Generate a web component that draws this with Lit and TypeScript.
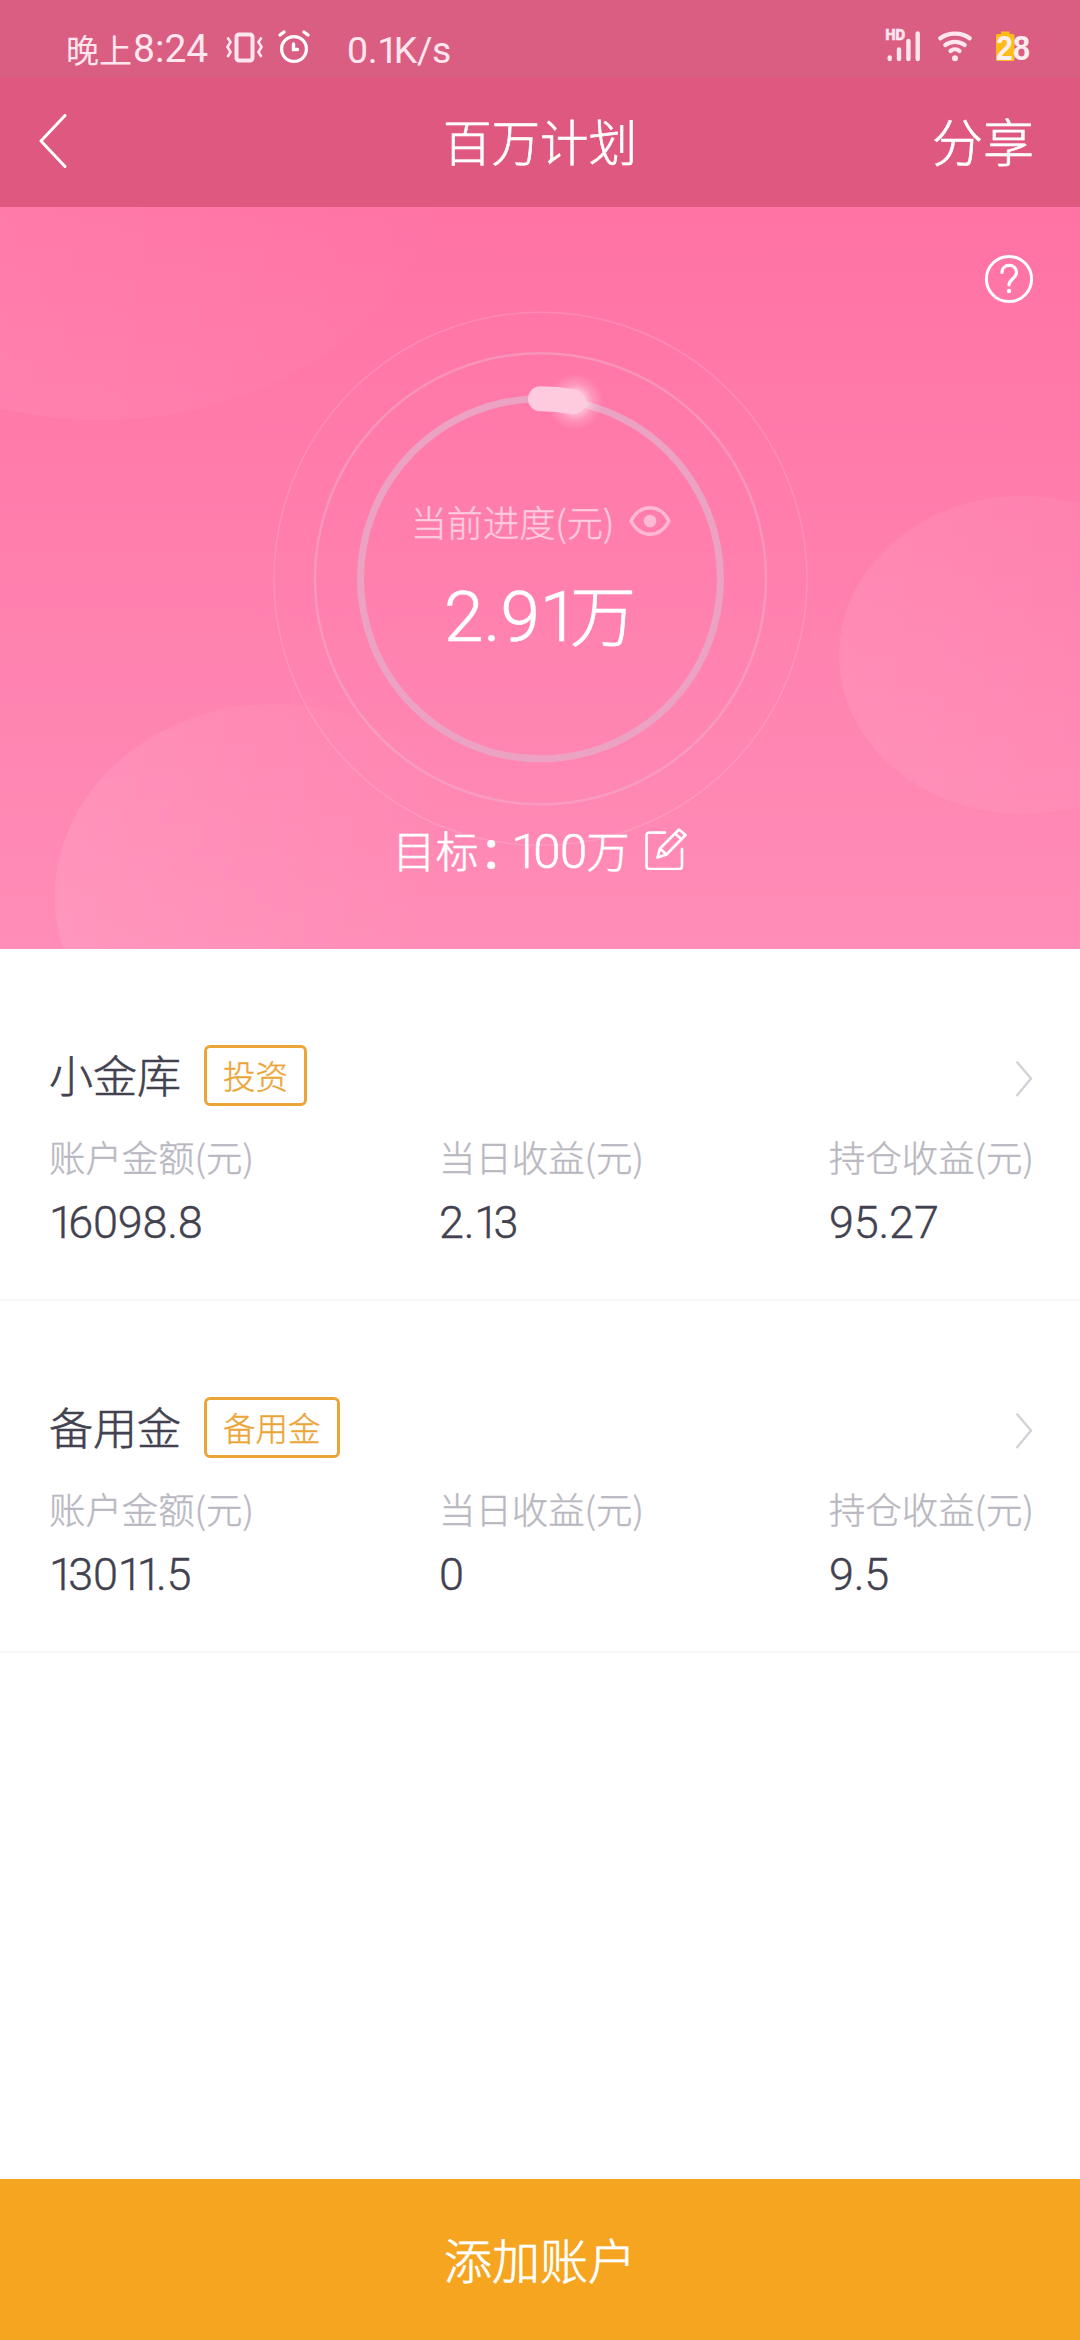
import { LitElement, html, css, svg } from "lit";
import { customElement, property } from "lit/decorators.js";

interface Account {
  name: string;
  tag: string;
  stats: { label: string; value: string }[];
}

const ACCOUNTS: Account[] = [
  {
    name: "小金库",
    tag: "投资",
    stats: [
      { label: "账户金额(元)", value: "16098.8" },
      { label: "当日收益(元)", value: "2.13" },
      { label: "持仓收益(元)", value: "95.27" },
    ],
  },
  {
    name: "备用金",
    tag: "备用金",
    stats: [
      { label: "账户金额(元)", value: "13011.5" },
      { label: "当日收益(元)", value: "0" },
      { label: "持仓收益(元)", value: "9.5" },
    ],
  },
];

/* Figures are proportional: the digit 1 takes less room than the others. */
const figures = (value: string) =>
  html`<span class="num">${[...value].map((c) => (c === "1" ? html`<span class="one">1</span>` : c))}</span>`;

const figureStyles = css`
  .num {
    font-family: Roboto, sans-serif;
  }
  .one {
    letter-spacing: -0.13em;
  }
`;

@customElement("status-bar")
export class StatusBar extends LitElement {
  static styles = [
    figureStyles,
    css`
      :host {
        display: flex;
        height: 77px;
        box-sizing: border-box;
        padding: 19px 50px 0 66px;
        align-items: center;
        justify-content: space-between;
        color: #ffe6ef;
        background: #da5d82;
      }
      .side {
        display: flex;
        align-items: center;
        height: 58px;
      }
      .time {
        display: flex;
        align-items: center;
        width: 160px;
        height: 58px;
        margin-top: 2px;
        font-size: 33px;
        line-height: 58px;
        white-space: nowrap;
      }
      .time .num {
        font-size: 39px;
        line-height: 56px;
        margin-left: 1px;
      }
      svg {
        display: block;
        overflow: visible;
      }
      .alarm {
        margin-left: 15px;
        margin-top: -2px;
      }
      .speed {
        margin-left: 37px;
        font-size: 37.500px;
        line-height: 56px;
      }
      .speed .num {
        letter-spacing: -0.4px;
      }
      .speed .one {
        letter-spacing: -0.12em;
      }
      .right {
        margin-top: -5px;
      }
      .wifi {
        margin-left: 17px;
      }
      .battery {
        margin-left: 22px;
      }
      .hd {
        font: 800 14px Inter, sans-serif;
        stroke: #ffe6ef;
        stroke-width: 0.6px;
      }
      .level {
        font: 700 35px "Liberation Sans", sans-serif;
      }
    `,
  ];

  render() {
    return html`
      <div class="side">
        <span class="time">晚上${figures("8:24")}</span>
        <svg width="37" height="32" viewBox="0 0 37 32" fill="none" stroke="#ffe6ef">
          <rect x="10.500" y="2.500" width="16" height="26" rx="2.5" stroke-width="4" />
          <path d="M1.500 5.500l3 4.500-3 5 3 5-3 5M35.500 5.500l-3 4.500 3 5-3 5 3 5" stroke-width="2.6" />
        </svg>
        <svg class="alarm" width="32" height="34" viewBox="0 0 32 34" fill="none" stroke="#fff" stroke-linecap="round">
          <circle cx="16" cy="19" r="12.4" stroke-width="3.2" />
          <path d="M15.5 14v5.5h4" stroke-width="3.4" />
          <path d="M2 5l4-3M30 5l-4-3" stroke-width="3.4" />
        </svg>
        <span class="speed">${figures("0.1K/s")}</span>
      </div>
      <div class="side right">
        <svg width="36" height="34" viewBox="0 0 36 34" fill="none" stroke="#ffe6ef" stroke-width="4.4" stroke-linecap="round">
          <text class="hd" x="0.500" y="11" textLength="19.500" lengthAdjust="spacingAndGlyphs" fill="#ffe6ef">HD</text>
          <path d="M4.7 28.5v1.500M14 20.5v9.500M23.4 12v18M32.700 4.500v25.500" />
        </svg>
        <svg class="wifi" width="34" height="34" viewBox="0 0 34 34" fill="none" stroke="#ffe6ef" stroke-width="4.200" stroke-linecap="round">
          <path d="M2.300 9.300c8.500-6.200 21-6.200 29.400 0M7.300 16c5.500-4.200 14-4.200 19.400 0M12.500 22c2.600-2.100 6.400-2.100 9 0" />
          <circle cx="17" cy="29.300" r="3" fill="#ffe6ef" stroke="none" />
        </svg>
        <svg class="battery" width="36" height="34" viewBox="0 0 36 34">
          <path d="M7 2.500h8.500V5H19q1.500 0 1.500 1.500V30.500q0 1.500-1.500 1.500H3.500q-1.500 0-1.500-1.500V6.500Q2 5 3.500 5H7z" fill="#fdbd16" />
          <text class="level" x="2" y="31" textLength="34" lengthAdjust="spacingAndGlyphs" fill="#ffeef0">28</text>
        </svg>
      </div>
    `;
  }
}

@customElement("nav-bar")
export class NavBar extends LitElement {
  static styles = css`
    :host {
      display: grid;
      grid-template-columns: 1fr auto 1fr;
      align-items: center;
      height: 130px;
      box-sizing: border-box;
      padding: 0 46px;
      background: #de587f;
      color: #fff;
      font-weight: 300;
      -webkit-text-stroke: 0.7px currentColor;
    }
    .back {
      margin-left: -8px;
    }
    .title,
    .share {
      font-size: 48.500px;
      line-height: 126px;
      height: 130px;
    }
    .share {
      justify-self: end;
      font-size: 51px;
      line-height: 126px;
    }
  `;

  render() {
    return html`
      <svg class="back" width="30" height="56" viewBox="0 0 30 56" fill="none" stroke="#fff" stroke-width="3" stroke-linecap="round" stroke-linejoin="round">
        <path d="M27 1.500L3 27l24 25.500" />
      </svg>
      <span class="title">百万计划</span>
      <span class="share">分享</span>
    `;
  }
}

@customElement("progress-hero")
export class ProgressHero extends LitElement {
  @property({ type: Number }) percent = 2.91;

  static styles = [
    figureStyles,
    css`
      :host {
        display: block;
        position: relative;
        height: 742px;
        overflow: hidden;
        background: linear-gradient(#ff72a4, #ff8db7);
        color: #fff;
        font-weight: 300;
      }
      .art {
        position: absolute;
        inset: 0;
      }
      .content {
        position: relative;
        display: flex;
        flex-direction: column;
        align-items: center;
        height: 742px;
      }
      .help {
        align-self: flex-end;
        margin: 47px 46px 0 0;
        display: block;
      }
      .caption {
        display: flex;
        align-items: center;
        margin-top: 191px;
        margin-left: 2px;
        height: 52px;
        font-size: 36.200px;
        line-height: 52px;
        color: #ffcbde;
        -webkit-text-stroke: 0.4px currentColor;
      }
      .eye {
        margin-left: 15px;
        margin-top: -1px;
      }
      .amount {
        display: flex;
        align-items: baseline;
        margin-top: 17px;
        height: 96px;
        line-height: 96px;
        font-size: 66px;
        -webkit-text-stroke: 0.7px currentColor;
      }
      .amount .num {
        font-size: 71px;
      }
      .goal {
        display: flex;
        align-items: center;
        margin-top: 159px;
        height: 60px;
        line-height: 60px;
        font-size: 43px;
        white-space: nowrap;
        -webkit-text-stroke: 0.6px currentColor;
      }
      .goal .num {
        font-size: 49px;
        line-height: 1;
        letter-spacing: -0.6px;
      }
      .goal .one {
        letter-spacing: -0.11em;
      }
      .colon {
        margin-left: 2px;
        letter-spacing: -12px;
        font-weight: 400;
        -webkit-text-stroke-width: 1.2px;
      }
      .edit {
        margin-left: 16px;
      }
    `,
  ];

  render() {
    const r = 180;
    const a = (this.percent / 100) * Math.PI * 2;
    const ex = 540.5 + r * Math.sin(a);
    const ey = 371.8 - r * Math.cos(a);
    return html`
      <svg class="art" width="1080" height="742" viewBox="0 0 1080 742" fill="none">
        <defs>
          <linearGradient id="b1" x1="0" x2="1">
            <stop offset="0.3" stop-color="#fff" stop-opacity="0.06" />
            <stop offset="1" stop-color="#fff" stop-opacity="0.005" />
          </linearGradient>
          <linearGradient id="b2" x1="0" x2="1" y1="0.2" y2="0.3">
            <stop offset="0" stop-color="#fff" stop-opacity="0.09" />
            <stop offset="0.9" stop-color="#fff" stop-opacity="0" />
          </linearGradient>
          <linearGradient id="b3" x1="0" x2="1">
            <stop offset="0" stop-color="#fff" stop-opacity="0.08" />
            <stop offset="1" stop-color="#fff" stop-opacity="0.01" />
          </linearGradient>
          <radialGradient id="glow">
            <stop offset="0.3" stop-color="#fff" stop-opacity="0.6" />
            <stop offset="0.65" stop-color="#fff" stop-opacity="0.2" />
            <stop offset="1" stop-color="#fff" stop-opacity="0" />
          </radialGradient>
        </defs>
        <ellipse cx="100" cy="-53" rx="342" ry="266" fill="url(#b1)" />
        <ellipse cx="275" cy="690" rx="220" ry="193" fill="url(#b2)" />
        <ellipse cx="1023" cy="448" rx="184" ry="159" fill="url(#b3)" />
        <circle cx="540.5" cy="371.8" r="266.500" stroke="#fff" stroke-opacity="0.15" stroke-width="1.400" />
        <circle cx="540.5" cy="371.8" r="225.500" stroke="#f0b0cb" stroke-opacity="0.5" stroke-width="2.500" />
        <circle cx="540.5" cy="371.8" r="180" stroke="#eca2c2" stroke-width="7" />
        ${svg`
          <circle cx=${ex + 2} cy=${ey} r="28" fill="url(#glow)" />
          <path d="M540.5 ${371.8 - r}A${r} ${r} 0 0 1 ${ex} ${ey}" stroke="#fecade" stroke-width="25" stroke-linecap="round" />
        `}
      </svg>
      <div class="content">
        <svg class="help" width="50" height="50" viewBox="0 0 50 50" fill="none" stroke="#fff" stroke-linecap="round">
          <circle cx="25" cy="25" r="22.600" stroke-width="3" />
          <path d="M18 18.500c0-9.500 14.500-9.500 14.500 0 0 5.500-7.500 7-7.500 12.500" stroke-width="3.200" />
          <circle cx="25" cy="37" r="2.200" fill="#fff" stroke="none" />
        </svg>
        <div class="caption">
          <span>当前进度(元)</span>
          <svg class="eye" width="42" height="30" viewBox="0 0 42 30" fill="none">
            <path d="M2 15C7 5.500 14 1.800 21 1.800S35 5.500 40 15C35 24.500 28 28.200 21 28.200S7 24.500 2 15z" stroke="#ffb9d3" stroke-width="3.400" stroke-linejoin="round" />
            <circle cx="21" cy="15" r="6.300" fill="#ffb9d3" />
          </svg>
        </div>
        <div class="amount">${figures("2.91")}万</div>
        <div class="goal">
          <span>目标<span class="colon">：</span>${figures("100")}万</span>
          <svg class="edit" width="42" height="42" viewBox="0 0 42 42" fill="none" stroke="#fff" stroke-width="2.600" stroke-linejoin="round" stroke-linecap="round">
            <path d="M20 4.600H4.500q-3 0-3 3V38q0 3 3 3H34q3 0 3-3V21" />
            <path d="M12.500 29.500l2.500-9L34 1.500l6.500 5.500-19 19.500zM30 5.500l6.500 5.800M15 20.500l6.500 6" />
          </svg>
        </div>
      </div>
    `;
  }
}

@customElement("account-card")
export class AccountCard extends LitElement {
  @property({ attribute: false }) account!: Account;

  static styles = [
    figureStyles,
    css`
      :host {
        display: block;
        height: 352px;
        box-sizing: border-box;
        padding: 96px 47px 0 49px;
        border-bottom: 2px solid #f7f7f8;
        font-weight: 300;
        color: #42414f;
        -webkit-text-stroke: 0.4px currentColor;
      }
      .head {
        display: flex;
        align-items: center;
        height: 61px;
      }
      .name {
        height: 61px;
        font-size: 44px;
        line-height: 59px;
        -webkit-text-stroke-width: 0.6px;
      }
      .tag {
        box-sizing: border-box;
        height: 61px;
        margin-left: 23px;
        padding: 0 16px;
        border: 3px solid #eba536;
        border-radius: 6px;
        font-size: 32.500px;
        line-height: 53px;
        color: #eba536;
      }
      .arrow {
        margin-left: auto;
        margin-top: 6px;
      }
      .stats {
        display: grid;
        grid-template-columns: 390px 390px auto;
        margin-top: 23px;
      }
      .label {
        height: 54px;
        line-height: 54px;
        font-size: 36.400px;
        color: #b9b8c1;
        white-space: nowrap;
      }
      .value {
        height: 60px;
        margin-top: 10px;
        font-family: Roboto, sans-serif;
        font-size: 45px;
        line-height: 60px;
      }
      .value .num {
        letter-spacing: -0.2px;
      }
      .value .one {
        letter-spacing: -0.13em;
      }
    `,
  ];

  render() {
    const { name, tag, stats } = this.account;
    return html`
      <div class="head">
        <span class="name">${name}</span>
        <span class="tag">${tag}</span>
        <svg class="arrow" width="18" height="36" viewBox="0 0 18 36" fill="none" stroke="#d2d2d9" stroke-width="2.400">
          <path d="M1.500 .500L16 17.500 1.500 35" />
        </svg>
      </div>
      <div class="stats">
        ${stats.map(
          (s) => html`<div>
            <div class="label">${s.label}</div>
            <div class="value">${figures(s.value)}</div>
          </div>`
        )}
      </div>
    `;
  }
}

@customElement("app-root")
export class AppRoot extends LitElement {
  static styles = css`
    :host {
      display: flex;
      flex-direction: column;
      width: 1080px;
      height: 2340px;
      overflow: hidden;
      background: #fff;
      font-family: "Noto Sans CJK SC", sans-serif;
    }
    .accounts {
      flex: 1;
    }
    .add {
      height: 161px;
      border: 0;
      padding: 0 0 3px;
      background: #f6a521;
      color: #fff;
      font-family: inherit;
      font-size: 48px;
      font-weight: 300;
      line-height: 158px;
      text-align: center;
      -webkit-text-stroke: 0.7px currentColor;
    }
  `;

  render() {
    return html`
      <status-bar></status-bar>
      <nav-bar></nav-bar>
      <progress-hero></progress-hero>
      <main class="accounts">${ACCOUNTS.map((a) => html`<account-card .account=${a}></account-card>`)}</main>
      <button class="add">添加账户</button>
    `;
  }
}
